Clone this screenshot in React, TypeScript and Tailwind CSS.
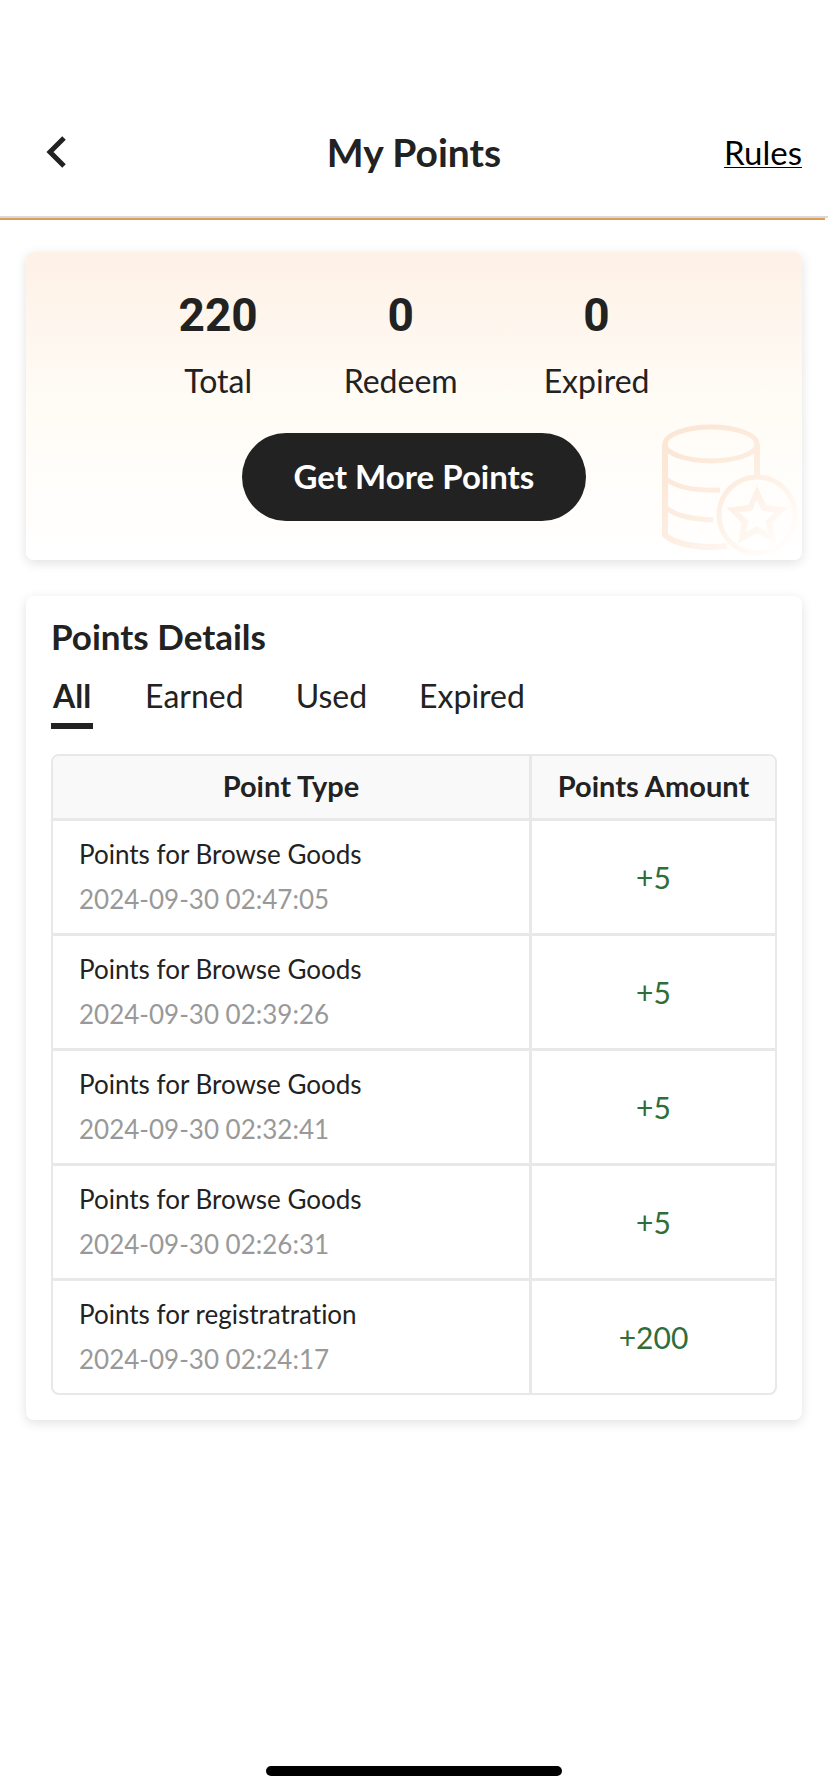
import { useState } from "react";
// Types
type StatType = {
  label: string;
  value: number;
};
type RecordType = {
  id: number;
  title: string;
  time: string;
  amount: number;
};
// Data
const stats: StatType[] = [
  { label: "Total", value: 220 },
  { label: "Redeem", value: 0 },
  { label: "Expired", value: 0 },
];
const tabs = ["All", "Earned", "Used", "Expired"];
const records: RecordType[] = [
  { id: 1, title: "Points for Browse Goods", time: "2024-09-30 02:47:05", amount: 5 },
  { id: 2, title: "Points for Browse Goods", time: "2024-09-30 02:39:26", amount: 5 },
  { id: 3, title: "Points for Browse Goods", time: "2024-09-30 02:32:41", amount: 5 },
  { id: 4, title: "Points for Browse Goods", time: "2024-09-30 02:26:31", amount: 5 },
  { id: 5, title: "Points for registratration", time: "2024-09-30 02:24:17", amount: 200 },
];

// Stack of coins behind the summary
const CoinsIcon = () => (
  <svg
    viewBox="0 0 136 132"
    fill="none"
    stroke="url(#coins)"
    strokeWidth="5"
    className="absolute right-1 bottom-1 w-[136px] h-[132px]"
    aria-hidden="true"
  >
    <defs>
      <linearGradient id="coins" gradientUnits="userSpaceOnUse" x1="25" y1="10" x2="115" y2="120">
        <stop offset="0" stopColor="#fce6d5" />
        <stop offset="0.5" stopColor="#fdeee2" />
        <stop offset="1" stopColor="#fffcf9" />
      </linearGradient>
    </defs>
    <ellipse cx="49" cy="20" rx="46" ry="17" />
    <path d="M3 20v91c8 8 28 12 46 12q9 0 16-1" strokeWidth="6" />
    <path d="M95 20v35" strokeWidth="6" />
    <path d="M3 54c10 9 28 13 55 12" />
    <path d="M3 83c10 9 26 12 48 13" />
    <circle cx="95" cy="91" r="38" />
    <path d="M95 69l7 15 17 2-12 12 3 16-15-8-15 8 3-16-12-12 17-2z" strokeWidth="6" />
  </svg>
);

// Header
const Header = () => (
  <header className="grid grid-cols-3 items-center h-32 px-[26px] border-b-2 border-[#d9d9d9] box-content">
    <button type="button" aria-label="Back" className="justify-self-start pl-5">
      <svg viewBox="0 0 20 32" fill="none" stroke="#222" strokeWidth="5" className="w-5 h-8">
        <path d="M18 2L4 16l14 14" />
      </svg>
    </button>
    <h1 className="text-[39px] leading-12 font-bold text-center whitespace-nowrap">My Points</h1>
    <a href="#rules" className="justify-self-end text-[33px] leading-10 text-black underline decoration-1 underline-offset-2">
      Rules
    </a>
  </header>
);

// Summary
const Summary = () => (
  <section className="relative flex flex-col items-center h-[308px] pt-[35px] rounded-lg overflow-hidden bg-linear-to-b from-[#fef1e6] via-[#fffcf6] to-white">
    <CoinsIcon />
    <dl className="flex gap-[86px]">
      {stats.map((stat) => (
        <div key={stat.label} className="flex flex-col-reverse items-center">
          <dt className="text-[32px] leading-10 mt-[18px]">{stat.label}</dt>
          <dd className="text-[46px] leading-14 font-bold font-[Roboto,sans-serif]">{stat.value}</dd>
        </div>
      ))}
    </dl>
    <button
      type="button"
      className="relative mt-8 h-[88px] w-[344px] rounded-full bg-[#222] text-white text-[33px] font-bold"
    >
      Get More Points
    </button>
  </section>
);

// Details
const Details = () => {
  const [active, setActive] = useState("All");

  return (
    <section className="px-[25px] pt-4 pb-[25px] rounded-lg bg-white shadow-[0_3px_12px_rgba(0,0,0,0.12)]">
      <h2 className="text-[35px] leading-12 font-bold">Points Details</h2>
      {/* Tabs */}
      <div role="tablist" className="flex gap-[52px] mt-[9px]">
        {tabs.map((tab) => (
          <button
            key={tab}
            type="button"
            role="tab"
            aria-selected={active === tab}
            onClick={() => setActive(tab)}
            className={
              active === tab
                ? "h-[60px] px-0.5 border-b-6 border-[#222] text-[32px] font-bold"
                : "h-[60px] border-b-6 border-transparent text-[32px]"
            }
          >
            {tab}
          </button>
        ))}
      </div>
      {/* Records */}
      <div className="mt-[25px] border-2 border-[#e8e8e8] rounded-lg overflow-hidden">
        <table className="w-full table-fixed border-separate border-spacing-0">
          <thead className="bg-[#f9f9f9] text-[29px] leading-8">
            <tr className="h-[62px]">
              <th className="pb-0.5 font-bold">Point Type</th>
              <th className="w-[246px] pb-0.5 font-bold border-l-3 border-[#e8e8e8]">Points Amount</th>
            </tr>
          </thead>
          <tbody>
            {records.map((record) => (
              <tr key={record.id} className="h-[115px]">
                <td className="px-[26px] border-t-3 border-[#e8e8e8] text-[26px] leading-[45px]">
                  <p>{record.title}</p>
                  <p className="text-[#999]">{record.time}</p>
                </td>
                <td className="border-t-3 border-l-3 border-[#e8e8e8] text-center text-[30px] text-[#2f6d3a]">
                  +{record.amount}
                </td>
              </tr>
            ))}
          </tbody>
        </table>
      </div>
    </section>
  );
};

// Page
const App = () => {
  return (
    <div className="min-h-screen flex flex-col pt-[88px] bg-white text-[#222] font-[Lato,sans-serif] [font-variant-ligatures:none]">
      <Header />
      <div className="h-0.5 mr-[3px] bg-[#de9d55]" />
      <main className="flex-1 flex flex-col gap-9 px-[26px] pt-8">
        <div className="rounded-lg shadow-[0_3px_12px_rgba(0,0,0,0.12)]">
          <Summary />
        </div>
        <Details />
      </main>
      {/* Home indicator */}
      <div className="w-[296px] h-2.5 mx-auto mb-4 rounded-full bg-black" />
    </div>
  );
};

export default App;
